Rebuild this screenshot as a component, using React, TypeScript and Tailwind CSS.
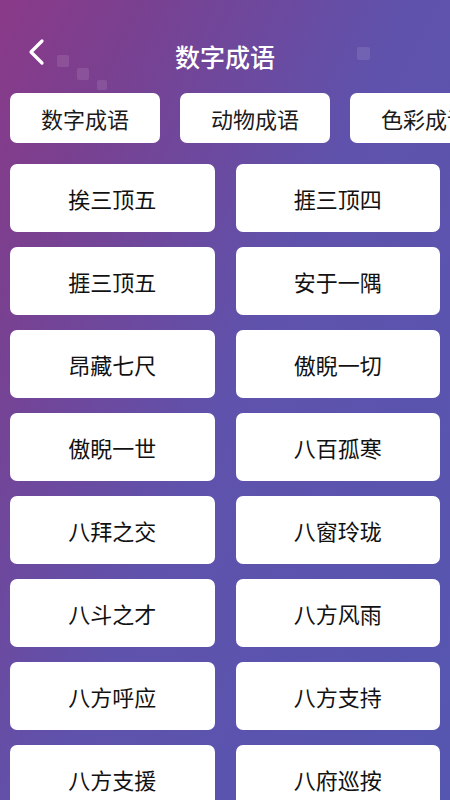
const TABS = ['数字成语', '动物成语', '色彩成语', '季节成语']

const IDIOMS: string[] = [
  '挨三顶五',
  '捱三顶四',
  '捱三顶五',
  '安于一隅',
  '昂藏七尺',
  '傲睨一切',
  '傲睨一世',
  '八百孤寒',
  '八拜之交',
  '八窗玲珑',
  '八斗之才',
  '八方风雨',
  '八方呼应',
  '八方支持',
  '八方支援',
  '八府巡按',
]

function BackIcon() {
  return (
    <svg width="18" height="28" viewBox="0 0 18 28" fill="none">
      <path
        d="M14 3 L3 14 L14 25"
        stroke="white"
        strokeWidth="3.2"
        strokeLinecap="round"
        strokeLinejoin="round"
      />
    </svg>
  )
}

export default function App() {
  return (
    <div
      className="relative h-[800px] w-[450px] overflow-hidden bg-[linear-gradient(115deg,#8a3a88_0%,#7a4090_17%,#5f52ac_50%,#5556b0_100%)]"
      style={{ fontFamily: '"Noto Sans CJK SC", "Noto Sans", sans-serif' }}
    >
      {/* faint decorative squares behind the header */}
      <div className="absolute left-[57px] top-[55px] h-[12px] w-[12px] rounded-[2px] bg-white/10" />
      <div className="absolute left-[77px] top-[68px] h-[12px] w-[12px] rounded-[2px] bg-white/10" />
      <div className="absolute left-[97px] top-[80px] h-[10px] w-[10px] rounded-[2px] bg-white/10" />
      <div className="absolute left-[357px] top-[47px] h-[13px] w-[13px] rounded-[2px] bg-white/10" />

      <header className="relative flex h-[93px] items-center px-[28px] pt-[20px]">
        <button className="flex w-[18px] -translate-y-[5px] items-center">
          <BackIcon />
        </button>
        <h1 className="flex-1 text-center text-[25px] font-medium leading-none text-white">
          数字成语
        </h1>
        <div className="w-[18px]" />
      </header>

      <div className="relative flex gap-[20px] overflow-hidden px-[10px]">
        {TABS.map((t) => (
          <div
            key={t}
            className="flex h-[50px] w-[150px] shrink-0 items-center justify-center rounded-[7px] bg-white text-[22px] text-[#1a1a1a]"
          >
            {t}
          </div>
        ))}
      </div>

      <div className="relative mt-[21px] grid grid-cols-2 gap-x-[21px] gap-y-[15px] px-[10px]">
        {IDIOMS.map((w) => (
          <div
            key={w}
            className="flex h-[68px] items-center justify-center rounded-[7px] bg-white text-[22px] text-[#111]"
          >
            {w}
          </div>
        ))}
      </div>
    </div>
  )
}
